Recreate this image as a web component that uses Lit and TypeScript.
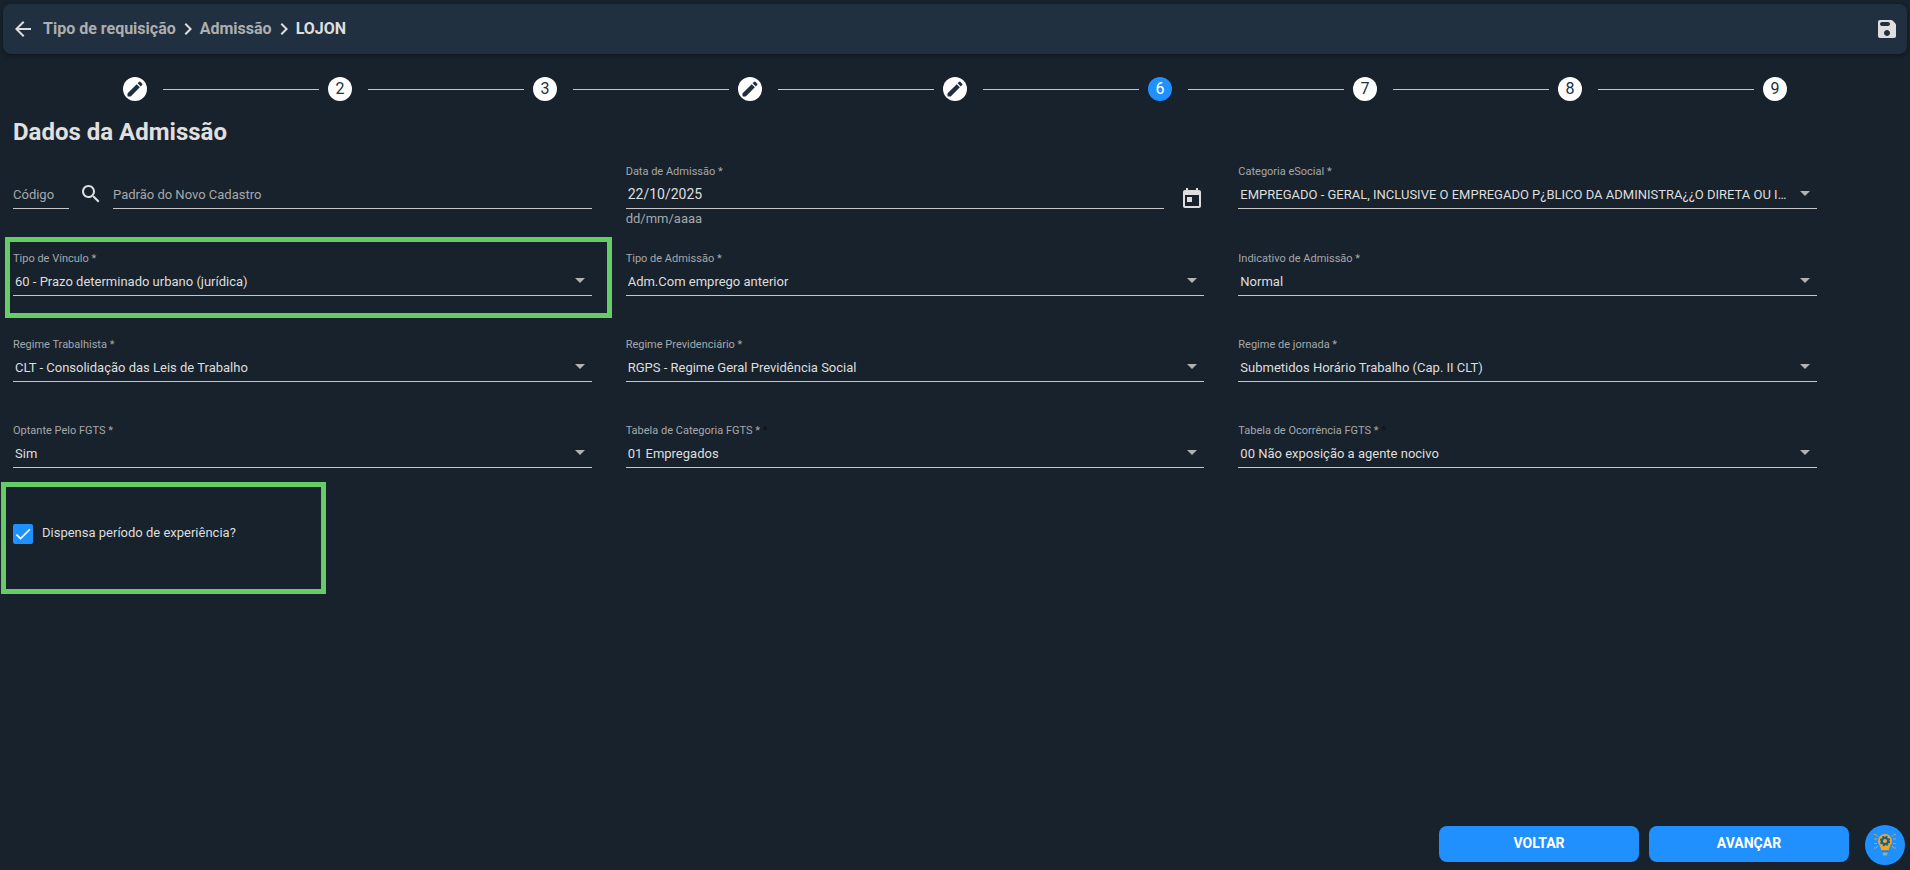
import { LitElement, html, css, svg, nothing } from "lit";
import { customElement, state } from "lit/decorators.js";
import { classMap } from "lit/directives/class-map.js";

interface Field {
  id: string;
  label: string;
  value: string;
  highlight?: boolean;
  doubleMark?: boolean;
}

const icons = {
  back: "M20 11H7.83l5.59-5.59L12 4l-8 8 8 8 1.41-1.41L7.83 13H20v-2z",
  chevron: "M10 6L8.59 7.41 13.17 12l-4.58 4.59L10 18l6-6z",
  save: "M17.59 3.59c-.38-.38-.89-.59-1.42-.59H5c-1.11 0-2 .9-2 2v14c0 1.1.9 2 2 2h14c1.1 0 2-.9 2-2V7.83c0-.53-.21-1.04-.59-1.41l-2.82-2.83zM12 19c-1.66 0-3-1.34-3-3s1.34-3 3-3 3 1.34 3 3-1.34 3-3 3zm1-10H7c-1.1 0-2-.9-2-2s.9-2 2-2h6c1.1 0 2 .9 2 2s-.9 2-2 2z",
  edit: "M3 17.46v3.04c0 .28.22.5.5.5h3.04c.13 0 .26-.05.35-.15L17.81 9.94l-3.75-3.75L3.15 17.1c-.1.1-.15.22-.15.36zM20.71 7.04a.996.996 0 0 0 0-1.41l-2.34-2.34a.996.996 0 0 0-1.41 0l-1.83 1.83 3.75 3.75 1.83-1.83z",
  search: "M15.5 14h-.79l-.28-.27C15.41 12.59 16 11.11 16 9.5 16 5.91 13.09 3 9.5 3S3 5.91 3 9.5 5.91 16 9.5 16c1.61 0 3.09-.59 4.23-1.57l.27.28v.79l5 4.99L20.49 19l-4.99-5zm-6 0C7.01 14 5 11.99 5 9.5S7.01 5 9.5 5 14 7.01 14 9.5 11.99 14 9.5 14z",
  today: "M19 3h-1V1h-2v2H8V1H6v2H5c-1.11 0-1.99.9-1.99 2L3 19c0 1.1.89 2 2 2h14c1.1 0 2-.9 2-2V5c0-1.1-.9-2-2-2zm0 16H5V8h14v11zM7 10h5v5H7z",
};

const icon = (path: string, size = 24) =>
  html`<svg width=${size} height=${size} viewBox="0 0 24 24" fill="currentColor" aria-hidden="true">
    ${svg`<path d=${path}></path>`}
  </svg>`;

const categoria: Field = {
  id: "categoria",
  label: "Categoria eSocial *",
  value: "EMPREGADO - GERAL, INCLUSIVE O EMPREGADO P¿BLICO DA ADMINISTRA¿¿O DIRETA OU INDIRETA",
};

const fields: Field[] = [
  { id: "vinculo", label: "Tipo de Vínculo *", value: "60 - Prazo determinado urbano (jurídica)", highlight: true },
  { id: "tipo", label: "Tipo de Admissão *", value: "Adm.Com emprego anterior" },
  { id: "indicativo", label: "Indicativo de Admissão *", value: "Normal" },
  { id: "trabalhista", label: "Regime Trabalhista *", value: "CLT - Consolidação das Leis de Trabalho" },
  { id: "previdenciario", label: "Regime Previdenciário *", value: "RGPS - Regime Geral Previdência Social" },
  { id: "jornada", label: "Regime de jornada *", value: "Submetidos Horário Trabalho (Cap. II CLT)" },
  { id: "fgts", label: "Optante Pelo FGTS *", value: "Sim" },
  { id: "categoria-fgts", label: "Tabela de Categoria FGTS *", value: "01 Empregados", doubleMark: true },
  { id: "ocorrencia-fgts", label: "Tabela de Ocorrência FGTS *", value: "00 Não exposição a agente nocivo", doubleMark: true },
];

@customElement("app-root")
export class AppRoot extends LitElement {
  @state() private current = 6;
  private edited = [1, 4, 5];

  static styles = css`
    :host {
      display: flex;
      flex-direction: column;
      box-sizing: border-box;
      min-height: 100vh;
      background: #18222c;
      color: #dedede;
      font-family: Roboto, "Liberation Sans", sans-serif;
      font-size: 13px;
      line-height: 16px;
    }
    * { box-sizing: border-box; }
    svg { display: block; flex: none; }
    button, input, select { font: inherit; color: inherit; margin: 0; padding: 0; border: 0; background: none; }
    button { cursor: pointer; }
    .bar {
      display: flex;
      align-items: center;
      margin: 4px 3px 0;
      padding: 0 8px;
      height: 50px;
      border-radius: 8px;
      background: #213040;
      box-shadow: 0 2px 4px rgba(0, 0, 0, 0.35);
      font-size: 16px;
      line-height: 20px;
      font-weight: 700;
    }
    .crumbs { display: flex; align-items: center; flex: 1; padding-left: 8px; }
    .crumb { color: #aeaeae; text-decoration: none; }
    .here { color: #dedede; }
    .steps { display: flex; align-items: center; padding: 0 123px; margin: 23px 0 0; }
    .step {
      flex: none;
      display: flex;
      align-items: center;
      justify-content: center;
      width: 24px;
      height: 24px;
      border-radius: 50%;
      background: #fff;
      color: #213040;
      font-size: 16px;
      line-height: 24px;
    }
    .step.active { background: #2090ff; color: #fff; }
    .line { flex: 1; height: 1px; margin: 0 9px 0 16px; background: #c4c6c8; }
    main { flex: 1; padding: 15px 93px 0 13px; }
    h1 { margin: 0; font-size: 24px; line-height: 32px; font-weight: 700; color: #e0e0e0; }
    .grid {
      display: grid;
      grid-template-columns: repeat(3, minmax(0, 1fr));
      grid-template-rows: 53px;
      gap: 34px;
      margin-top: 10px;
    }
    .field { position: relative; display: flex; flex-direction: column; height: 52px; padding-top: 7px; }
    .label { font-size: 11px; line-height: 14px; color: #a5a8ab; white-space: nowrap; }
    .mark { color: #0c1116; }
    .hint { color: #a5a8ab; line-height: 16px; }
    .control { flex: none; display: grid; align-items: center; height: 30px; border-bottom: 1px solid #c4c6c8; }
    .control > * { grid-area: 1 / 1; }
    .control.grow { flex: 1; min-width: 0; }
    .select { appearance: none; width: 100%; padding: 3px 28px 0 2px; height: 29px; text-overflow: ellipsis; overflow: hidden; white-space: nowrap; outline: none; }
    .arrow { justify-self: end; margin-right: 7px; color: #b0b2b4; pointer-events: none; }
    .text { width: 100%; height: 29px; padding-top: 2px; outline: none; }
    .text::placeholder { color: #a5a8ab; opacity: 1; }
    .date { font-size: 14px; padding: 0 0 0 2px; }
    .lookup { display: flex; align-items: flex-end; }
    .code { width: 56px; }
    .find { padding: 0 10px 3px; }
    .when { display: flex; align-items: flex-start; }
    .pick { padding: 8px 0 0 16px; }
    .outlined::after {
      content: "";
      position: absolute;
      inset: -8px -20px -21px -8px;
      border: 5px solid #66cc66;
      pointer-events: none;
    }
    .check { position: relative; display: inline-flex; align-items: center; gap: 9px; margin-top: 55px; }
    .outlined.check::after { inset: -42px -90px -50px -12px; }
    .caption { padding-bottom: 2px; }
    .tick { display: grid; width: 20px; height: 20px; }
    .tick > * { grid-area: 1 / 1; }
    .box { appearance: none; width: 20px; height: 20px; border-radius: 2px; border: 2px solid #c4c6c8; }
    .box:checked { background: #2090ff; border-color: #2090ff; }
    .tick svg { pointer-events: none; }
    footer { display: flex; justify-content: flex-end; align-items: center; padding: 0 5px 5px; gap: 10px; }
    .action { width: 200px; height: 36px; margin-bottom: 2px; padding-bottom: 2px; border-radius: 8px; background: #2090ff; color: #fff; font-size: 14px; font-weight: 700; }
    .tip { display: grid; place-items: center; width: 40px; height: 40px; margin-left: 6px; border-radius: 50%; background: #2090ff; }
  `;

  private renderSelect(f: Field) {
    return html`
      <div class=${classMap({ field: true, outlined: !!f.highlight })}>
        <label class="label" for=${f.id}>${f.label}${f.doubleMark ? html` <span class="mark">*</span>` : nothing}</label>
        <div class="control">
          <select class="select" id=${f.id}><option>${f.value}</option></select>
          <svg class="arrow" width="10" height="5" viewBox="0 0 10 5" aria-hidden="true"><path d="M0 0h10L5 5z" fill="currentColor"></path></svg>
        </div>
      </div>`;
  }

  private renderStep(n: number) {
    return html`
      ${n > 1 ? html`<span class="line"></span>` : nothing}
      <button class=${classMap({ step: true, active: n === this.current })} aria-label=${`Etapa ${n}`} @click=${() => (this.current = n)}>
        ${this.edited.includes(n) ? icon(icons.edit, 20) : n}
      </button>`;
  }

  render() {
    return html`
      <header class="bar">
        <button aria-label="Voltar">${icon(icons.back)}</button>
        <nav class="crumbs">
          <a class="crumb" href="#">Tipo de requisição</a>
          ${icon(icons.chevron)}
          <a class="crumb" href="#">Admissão</a>
          ${icon(icons.chevron)}
          <span class="here">LOJON</span>
        </nav>
        <button aria-label="Salvar">${icon(icons.save)}</button>
      </header>
      <nav class="steps">${[1, 2, 3, 4, 5, 6, 7, 8, 9].map((n) => this.renderStep(n))}</nav>
      <main>
        <h1>Dados da Admissão</h1>
        <div class="grid">
          <div class="field">
            <div class="label">&nbsp;</div>
            <div class="lookup">
              <div class="control code"><input class="text" aria-label="Código" placeholder="Código" /></div>
              <button class="find" aria-label="Pesquisar">${icon(icons.search)}</button>
              <div class="control grow"><input class="text" aria-label="Padrão do Novo Cadastro" placeholder="Padrão do Novo Cadastro" /></div>
            </div>
          </div>
          <div class="field">
            <label class="label" for="data">Data de Admissão *</label>
            <div class="when">
              <div class="control grow"><input class="text date" id="data" value="22/10/2025" /></div>
              <button class="pick" aria-label="Abrir calendário">${icon(icons.today)}</button>
            </div>
            <div class="hint">dd/mm/aaaa</div>
          </div>
          ${this.renderSelect(categoria)}
          ${fields.map((f) => this.renderSelect(f))}
        </div>
        <label class="check outlined">
          <span class="tick">
            <input class="box" type="checkbox" checked />
            <svg width="20" height="20" viewBox="0 0 24 24" fill="none" stroke="#fff" stroke-width="2" aria-hidden="true"><path d="M4.1 12.7 9 17.6 20.3 6.3"></path></svg>
          </span>
          <span class="caption">Dispensa período de experiência?</span>
        </label>
      </main>
      <footer>
        <button class="action">VOLTAR</button>
        <button class="action">AVANÇAR</button>
        <button class="tip" aria-label="Dicas">
          <svg width="24" height="24" viewBox="0 0 24 24" fill="none" aria-hidden="true">
            <path d="M12 1a7 7 0 0 0-7 7c0 3.2 2.6 4.6 3.4 9.5h7.2C16.4 12.6 19 11.2 19 8a7 7 0 0 0-7-7z" fill="#f5a623"></path>
            <path d="M8.6 17.5h6.8v2H8.6z" fill="#2d7fb5"></path>
            <path d="M9.2 19.5h5.6l-1.2 3h-3.2z" fill="#8fb0b8"></path>
            <circle cx="12" cy="8" r="3.2" stroke="#14618f" stroke-width="2.2"></circle>
            <circle cx="12" cy="8" r="4.7" stroke="#14618f" stroke-width="1.2" stroke-dasharray="2 1.7"></circle>
            <path d="M1 1.5h2l2 2M1 6h3M1 10.5h3M1 15h2l2-2M23 1.5h-2l-2 2M23 6h-3M23 10.5h-3M23 15h-2l-2-2" stroke="#b9a860" stroke-width="1"></path>
          </svg>
        </button>
      </footer>
    `;
  }
}
